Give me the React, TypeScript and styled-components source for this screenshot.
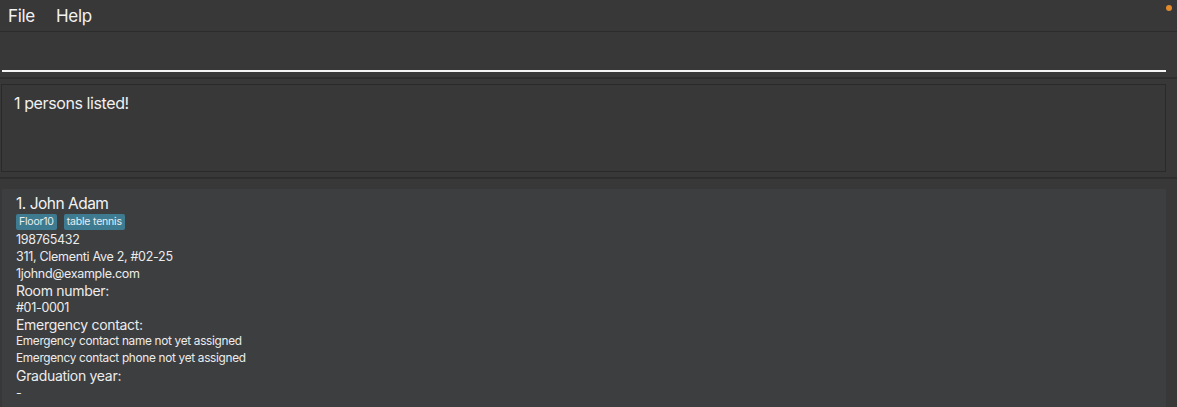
import React from "react";
import styled, { createGlobalStyle } from "styled-components";

const GlobalStyle = createGlobalStyle`
  html, body {
    margin: 0;
    padding: 0;
    background: #383838;
  }
  * {
    box-sizing: border-box;
  }
`;

const Window = styled.div`
  width: 1177px;
  height: 407px;
  overflow: hidden;
  display: flex;
  flex-direction: column;
  background: #383838;
  color: #ffffff;
  font-family: Inter, "Open Sans", sans-serif;
`;

const MenuBar = styled.div`
  position: relative;
  flex-shrink: 0;
  height: 32px;
  display: flex;
  align-items: center;
  gap: 21px;
  padding: 0 0 0 8px;
  border-bottom: 1px solid #2c2c2c;
`;

const MenuItem = styled.span`
  font-size: 17px;
  letter-spacing: -0.3px;
  color: #f2f2f2;
`;

const Dot = styled.span`
  position: absolute;
  right: 5px;
  top: 5px;
  width: 6px;
  height: 6px;
  border-radius: 50%;
  background: #e38a2a;
`;

const CommandPane = styled.div`
  flex-shrink: 0;
  height: 47px;
  padding: 0 11px 0 2px;
  display: flex;
  align-items: flex-end;
  border-bottom: 2px solid #2e2e2e;
`;

const CommandInput = styled.div`
  width: 100%;
  height: 7px;
  border-top: 2px solid #f5f5f5;
`;

const ResultPane = styled.div`
  flex-shrink: 0;
  padding: 5px 11px 5px 1px;
  border-bottom: 2px solid #2e2e2e;
`;

const ResultBox = styled.div`
  height: 88px;
  border: 1px solid #2a2a2a;
  padding: 8px 12px;
  font-size: 16px;
  letter-spacing: -0.4px;
  color: #f0f0f0;
`;

const ListPane = styled.div`
  flex: 1;
  min-height: 0;
  overflow: hidden;
  padding: 10px 11px 0 2px;
`;

const Card = styled.div`
  min-height: 100%;
  background: #3c3e40;
  padding: 5px 14px;
  display: flex;
  flex-direction: column;
`;

const Name = styled.div`
  font-size: 15.5px;
  letter-spacing: -0.5px;
  line-height: 20px;
  color: #f2f2f2;
`;

const Tags = styled.div`
  display: flex;
  gap: 7px;
  margin: 0 0 1px;
`;

const Tag = styled.span`
  background: #3e7b91;
  color: #e8eef0;
  font-size: 10.5px;
  letter-spacing: -0.2px;
  line-height: 16px;
  padding: 0 3px;
  border-radius: 2px;
`;

const Line = styled.div<{ $size?: number }>`
  font-size: ${(p) => p.$size ?? 12.5}px;
  letter-spacing: -0.3px;
  line-height: 17px;
  color: #ececec;
  white-space: nowrap;
`;

const person = {
  name: "1. John Adam",
  tags: ["Floor10", "table tennis"],
  phone: "198765432",
  address: "311, Clementi Ave 2, #02-25",
  email: "1johnd@example.com",
  room: "#01-0001",
  ecName: "Emergency contact name not yet assigned",
  ecPhone: "Emergency contact phone not yet assigned",
  grad: "-",
};

export default function App() {
  return (
    <Window>
      <GlobalStyle />
      <MenuBar>
        <MenuItem>File</MenuItem>
        <MenuItem>Help</MenuItem>
        <Dot />
      </MenuBar>
      <CommandPane>
        <CommandInput />
      </CommandPane>
      <ResultPane>
        <ResultBox>1 persons listed!</ResultBox>
      </ResultPane>
      <ListPane>
        <Card>
          <Name>{person.name}</Name>
          <Tags>
            {person.tags.map((t) => (
              <Tag key={t}>{t}</Tag>
            ))}
          </Tags>
          <Line>{person.phone}</Line>
          <Line>{person.address}</Line>
          <Line>{person.email}</Line>
          <Line $size={14}>Room number:</Line>
          <Line>{person.room}</Line>
          <Line $size={14}>Emergency contact:</Line>
          <Line $size={11.8}>{person.ecName}</Line>
          <Line $size={11.8}>{person.ecPhone}</Line>
          <Line $size={14}>Graduation year:</Line>
          <Line>{person.grad}</Line>
        </Card>
      </ListPane>
    </Window>
  );
}
